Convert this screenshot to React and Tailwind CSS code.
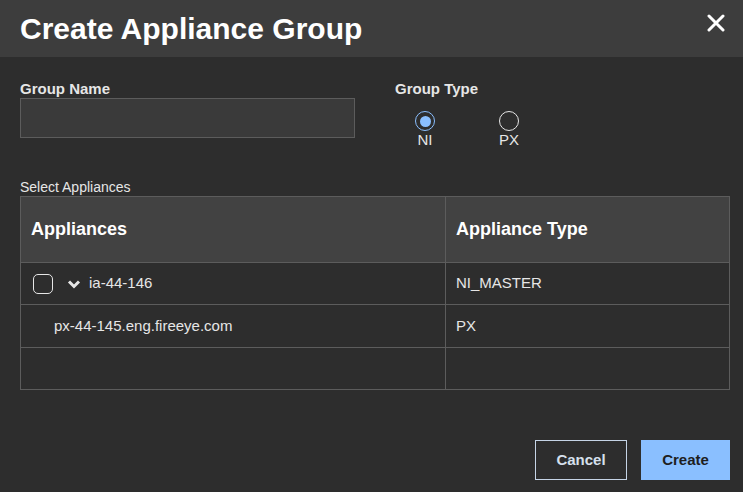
import React from 'react';

const App = () => {
  return (
    <div className="w-[743px] h-[492px] bg-[#2d2d2d] text-[#e6e6e6] overflow-hidden" style={{ fontFamily: '"Liberation Sans", Arial, sans-serif' }}>
      <div className="h-[57px] bg-[#3d3d3d] flex items-center justify-between pl-5 pr-[18px]">
        <h1 className="text-[30px] font-bold text-white">Create Appliance Group</h1>
        <svg width="18" height="18" viewBox="0 0 18 18" className="mb-[12px]">
          <path d="M2 2L16 16M16 2L2 16" stroke="white" strokeWidth="3" strokeLinecap="round" />
        </svg>
      </div>
      <div className="px-5">
        <div className="flex mt-[23px]">
          <div className="w-[375px]">
            <div className="text-[15px] font-bold text-[#e6e6e6] leading-[18px]">Group Name</div>
            <div className="w-[335px] h-[40px] bg-[#3a3a3a] border border-[#5c5c5c]" />
          </div>
          <div>
            <div className="text-[15px] font-bold leading-[18px]">Group Type</div>
            <div className="flex gap-[64px] ml-[20px] mt-[13px]">
              <div className="flex flex-col items-center">
                <span className="w-[20px] h-[20px] rounded-full border border-[#8abfff] flex items-center justify-center">
                  <span className="w-[11px] h-[11px] rounded-full bg-[#8abfff]" />
                </span>
                <span className="text-[15px] leading-[18px]">NI</span>
              </div>
              <div className="flex flex-col items-center">
                <span className="w-[20px] h-[20px] rounded-full border border-[#e6e6e6]" />
                <span className="text-[15px] leading-[18px]">PX</span>
              </div>
            </div>
          </div>
        </div>
        <div className="text-[14px] mt-[29px] leading-[18px]">Select Appliances</div>
        <div className="w-[710px] border border-[#5c5c5c]">
          <div className="flex h-[66px] bg-[#424242] border-b border-[#5c5c5c] text-[18px] font-bold text-white">
            <div className="w-[425px] border-r border-[#5c5c5c] flex items-center pl-[10px]">Appliances</div>
            <div className="flex-1 flex items-center pl-[10px]">Appliance Type</div>
          </div>
          <div className="flex h-[42px] border-b border-[#5c5c5c] text-[15px]">
            <div className="w-[425px] border-r border-[#5c5c5c] flex items-center pl-[12px]">
              <span className="w-[20px] h-[20px] rounded-[5px] border border-[#e6e6e6]" />
              <svg width="14" height="10" viewBox="0 0 14 10" className="ml-[14px] mr-[8px]">
                <path d="M2 2.5L7 7.5L12 2.5" stroke="#e6e6e6" strokeWidth="3" fill="none" />
              </svg>
              ia-44-146
            </div>
            <div className="flex-1 flex items-center pl-[10px]">NI_MASTER</div>
          </div>
          <div className="flex h-[43px] border-b border-[#5c5c5c] text-[15px]">
            <div className="w-[425px] border-r border-[#5c5c5c] flex items-center pl-[33px]">px-44-145.eng.fireeye.com</div>
            <div className="flex-1 flex items-center pl-[10px]">PX</div>
          </div>
          <div className="flex h-[41px]">
            <div className="w-[425px] border-r border-[#5c5c5c]" />
            <div className="flex-1" />
          </div>
        </div>
        <div className="flex justify-end gap-[14px] mt-[50px] w-[710px]">
          <button className="w-[92px] h-[40px] border border-[#c5d4e6] text-[15px] font-bold text-[#d6e0ec]">Cancel</button>
          <button className="w-[89px] h-[40px] bg-[#8abfff] text-[15px] font-bold text-[#1e1e1e]">Create</button>
        </div>
      </div>
    </div>
  );
};

export default App;
